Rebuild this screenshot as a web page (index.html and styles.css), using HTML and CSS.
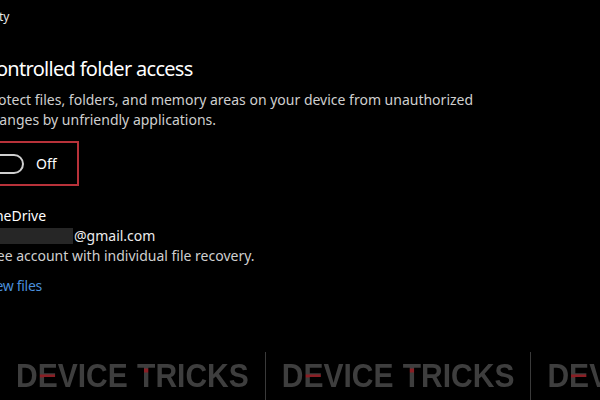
FILE: index.html
```html
<!DOCTYPE html>
<html lang="en">
<head>
    <meta charset="UTF-8">
    <meta name="viewport" content="width=device-width, initial-scale=1.0">
    <title>Windows Security - Ransomware protection</title>
    <link rel="stylesheet" href="styles.css">
</head>
<body>
    <div class="window">
        <div class="titlebar">Windows Security</div>

        <main class="page">
            <section class="cfa">
                <h2>Controlled folder access</h2>
                <p>Protect files, folders, and memory areas on your device from unauthorized<br>changes by unfriendly applications.</p>
                <div class="highlight">
                    <span class="toggle"></span>
                    <span class="toggle-label">Off</span>
                </div>
            </section>

            <section class="recovery">
                <h3>OneDrive</h3>
                <div class="email"><span class="redacted"></span>@gmail.com</div>
                <p>Free account with individual file recovery.</p>
                <a class="link" href="#">View files</a>
            </section>
        </main>

        <!-- watermark -->
        <div class="watermark">
            <span class="mark">D<span class="accent-mid">E</span>VICE <span class="accent-top">T</span>RICKS</span>
            <span class="divider"></span>
            <span class="mark">D<span class="accent-mid">E</span>VICE <span class="accent-top">T</span>RICKS</span>
            <span class="divider"></span>
            <span class="mark">D<span class="accent-mid">E</span>VICE <span class="accent-top">T</span>RICKS</span>
        </div>
    </div>
</body>
</html>
```

FILE: styles.css
```css
:root {
    --bg-color: #000000;
    --text-color: #ffffff;
    --muted-color: #cfcfcf;
    --link-color: #4a8fdc;
    --mark-color: #3e3e3e;
    --mark-red: #8a1e24;
    --highlight-color: #b8323a;
}

* {
    margin: 0;
    padding: 0;
    box-sizing: border-box;
}

body {
    font-family: 'Noto Sans', 'Open Sans', sans-serif;
    background-color: var(--bg-color);
    color: var(--text-color);
    overflow: hidden;
}

.window {
    position: relative;
    width: 600px;
    height: 400px;
    overflow: hidden;
}

.titlebar {
    font-size: 12px;
    line-height: 16px;
    padding-top: 9px;
    margin-left: -90px;
    color: #e8e8e8;
}

.page {
    margin-left: -16px;
    padding-top: 30px;
}

.cfa h2 {
    font-size: 20px;
    font-weight: 400;
    line-height: 28px;
    letter-spacing: -0.7px;
    margin-bottom: 7px;
}

.cfa p,
.recovery p {
    font-size: 14px;
    line-height: 20px;
    color: var(--muted-color);
}

.highlight {
    display: inline-flex;
    align-items: center;
    gap: 12px;
    margin: 11px 0 0 -10px;
    padding: 0 20px 0 8px;
    height: 45px;
    border: 2px solid var(--highlight-color);
}

.toggle {
    width: 40px;
    height: 20px;
    border: 2px solid #cfcfcf;
    border-radius: 10px;
}

.toggle-label {
    font-size: 14px;
}

.recovery {
    margin-top: 20px;
}

.recovery h3 {
    font-size: 14px;
    font-weight: 400;
    line-height: 20px;
}

.email {
    display: flex;
    align-items: center;
    font-size: 14px;
    line-height: 20px;
    color: #ececec;
}

.redacted {
    width: 89px;
    height: 16px;
    background: #262626;
    margin-right: 1px;
}

.link {
    display: inline-block;
    margin-top: 10px;
    font-size: 14px;
    line-height: 20px;
    letter-spacing: -0.3px;
    color: var(--link-color);
    text-decoration: none;
}

.watermark {
    position: absolute;
    left: 16px;
    top: 352px;
    height: 48px;
    display: flex;
    align-items: center;
    gap: 16px;
    white-space: nowrap;
}

.mark {
    font-family: 'Liberation Sans', sans-serif;
    font-weight: 700;
    font-size: 30px;
    line-height: 48px;
    color: var(--mark-color);
    word-spacing: 1px;
    display: inline-block;
    transform: scaleY(1.08);
}

.accent-mid,
.accent-top {
    color: transparent;
    -webkit-background-clip: text;
    background-clip: text;
}

.accent-mid {
    background-image: linear-gradient(to bottom, var(--mark-color) 0 46%, var(--mark-red) 46% 56%, var(--mark-color) 56%);
}

.accent-top {
    background-image: linear-gradient(to bottom, var(--mark-color) 0 30%, var(--mark-red) 30% 42%, var(--mark-color) 42%);
}

.divider {
    width: 1px;
    height: 48px;
    background: #3a3a3a;
}
```
